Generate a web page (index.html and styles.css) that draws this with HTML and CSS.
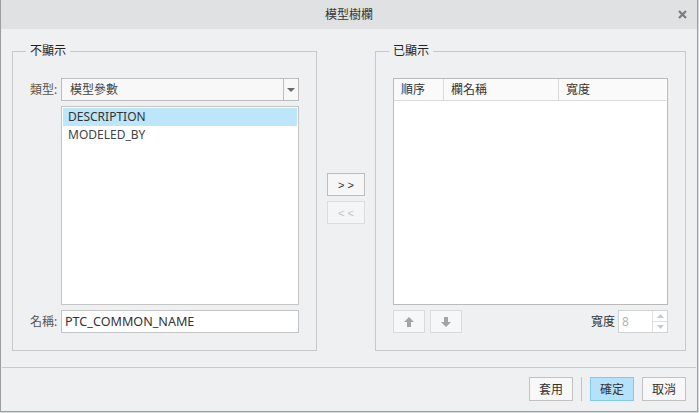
FILE: index.html
```html
<!DOCTYPE html>
<html lang="zh-Hant-TW">

<head>
    <meta charset="UTF-8">
    <meta name="viewport" content="width=device-width, initial-scale=1.0">
    <title>模型樹欄</title>
    <link rel="stylesheet" href="styles.css">
</head>

<body>
    <div class="dialog">
        <div class="titlebar">
            <span></span>
            <span class="title">模型樹欄</span>
            <span class="close">
                <svg width="9" height="9" viewBox="0 0 9 9">
                    <path d="M1 1 L8 8 M8 1 L1 8" stroke="#7b7b7b" stroke-width="2.2" fill="none" />
                </svg>
            </span>
        </div>

        <div class="content">
            <fieldset class="group group-left">
                <legend>不顯示</legend>
                <div class="group-body">
                    <div class="field-row">
                        <span class="field-label">類型:</span>
                        <div class="combo">
                            <span class="combo-text">模型參數</span>
                            <span class="combo-arrow">
                                <svg width="8" height="4" viewBox="0 0 8 4">
                                    <path d="M0 0 H8 L4 4 Z" fill="#6a6a6a" />
                                </svg>
                            </span>
                        </div>
                    </div>
                    <div class="list">
                        <div class="list-item selected">DESCRIPTION</div>
                        <div class="list-item">MODELED_BY</div>
                    </div>
                    <div class="field-row">
                        <span class="field-label">名稱:</span>
                        <input class="text-input" type="text" value="PTC_COMMON_NAME">
                    </div>
                </div>
            </fieldset>

            <div class="mover">
                <button class="move-btn">&gt; &gt;</button>
                <button class="move-btn" disabled>&lt; &lt;</button>
            </div>

            <fieldset class="group group-right">
                <legend>已顯示</legend>
                <div class="group-body">
                    <div class="table">
                        <div class="table-head">
                            <div class="th col-order">順序</div>
                            <div class="th col-name">欄名稱</div>
                            <div class="th col-width">寬度</div>
                        </div>
                    </div>
                    <div class="tool-row">
                        <button class="icon-btn">
                            <svg width="10" height="10" viewBox="0 0 10 10">
                                <path d="M5 0 L10 5 H7 V10 H3 V5 H0 Z" fill="#a4a4a4" />
                            </svg>
                        </button>
                        <button class="icon-btn">
                            <svg width="10" height="10" viewBox="0 0 10 10">
                                <path d="M5 10 L10 5 H7 V0 H3 V5 H0 Z" fill="#a4a4a4" />
                            </svg>
                        </button>
                        <span class="spin-label">寬度</span>
                        <div class="spinner">
                            <span class="spin-value">8</span>
                            <span class="spin-arrows">
                                <span class="spin-half">
                                    <svg width="7" height="4" viewBox="0 0 7 4"><path d="M0 4 H7 L3.5 0 Z" fill="#c9c9c9" /></svg>
                                </span>
                                <span class="spin-half">
                                    <svg width="7" height="4" viewBox="0 0 7 4"><path d="M0 0 H7 L3.5 4 Z" fill="#c9c9c9" /></svg>
                                </span>
                            </span>
                        </div>
                    </div>
                </div>
            </fieldset>
        </div>

        <div class="footer">
            <button class="btn">套用</button>
            <span class="divider"></span>
            <button class="btn btn-primary">確定</button>
            <button class="btn">取消</button>
        </div>
    </div>
</body>

</html>
```

FILE: styles.css
```css
* {
    box-sizing: border-box;
}

body {
    margin: 0;
    background-color: #d6dcdd;
    font-family: "Noto Sans", "Noto Sans CJK TC", sans-serif;
    font-size: 12px;
    color: #333;
}

.dialog {
    width: 698px;
    height: 412px;
    display: flex;
    flex-direction: column;
    background-color: #eff0f2;
    border: 1px solid #9d9d9d;
    border-top: 0;
}

.titlebar {
    height: 29px;
    display: grid;
    grid-template-columns: 1fr auto 1fr;
    align-items: center;
    background-color: #dfe1e2;
}

.title {
    line-height: 16px;
    color: #333;
}

.close {
    justify-self: end;
    margin-right: 10px;
    display: flex;
}

.content {
    display: flex;
    padding: 14px 11px 16px;
}

.group {
    margin: 0;
    padding: 0;
    min-width: 0;
    height: 308px;
    border: 1px solid #c8c9cc;
}

.group legend {
    margin-left: 13px;
    padding: 0 4px;
    line-height: 16px;
    color: #222;
}

.group-left {
    width: 305px;
}

.group-right {
    width: 311px;
}

.group-body {
    display: flex;
    flex-direction: column;
    gap: 5px;
    padding: 19px 17px 17px;
}

.field-row {
    display: flex;
    align-items: center;
    height: 23px;
}

.field-label {
    width: 31px;
    color: #555;
    line-height: 16px;
}

.combo {
    flex: 1;
    height: 23px;
    display: flex;
    background-color: #f8f8f8;
    border: 1px solid #bdbdbd;
}

.combo-text {
    flex: 1;
    padding-left: 8px;
    line-height: 21px;
    color: #444;
}

.combo-arrow {
    width: 15px;
    display: flex;
    align-items: center;
    justify-content: center;
    border-left: 1px solid #bdbdbd;
}

.list {
    margin-left: 31px;
    height: 199px;
    padding: 1px;
    background-color: #fff;
    border: 1px solid #c4c4c4;
}

.list-item {
    height: 18px;
    padding-left: 5px;
    line-height: 18px;
    color: #444;
}

.list-item.selected {
    background-color: #bee6fb;
    color: #333;
}

.text-input {
    flex: 1;
    height: 23px;
    margin: 0;
    padding: 0 0 0 3px;
    font-family: inherit;
    font-size: 12.6px;
    color: #333;
    background-color: #fff;
    border: 1px solid #c4c4c4;
    outline: none;
}

.mover {
    width: 58px;
    display: flex;
    flex-direction: column;
    gap: 5px;
    padding: 130px 0 0 10px;
}

.move-btn {
    width: 38px;
    height: 23px;
    padding: 0;
    font-family: "Liberation Sans", sans-serif;
    font-size: 11px;
    color: #333;
    background-color: #f6f6f7;
    border: 1px solid #bdbdbd;
}

.move-btn:disabled {
    color: #c4c4c4;
    background-color: #f4f5f6;
    border-color: #dcdcdc;
}

.table {
    height: 227px;
    background-color: #fff;
    border: 1px solid #bababa;
}

.table-head {
    display: flex;
    height: 22px;
    margin-right: 1px;
    background-color: #fafafa;
    border-bottom: 1px solid #d9d9d9;
}

.th {
    padding-left: 7px;
    line-height: 21px;
    color: #333;
}

.col-order {
    width: 50px;
    border-right: 1px solid #d9d9d9;
}

.col-name {
    width: 115px;
    border-right: 1px solid #d9d9d9;
}

.col-width {
    flex: 1;
}

.tool-row {
    display: flex;
    align-items: center;
    gap: 5px;
    height: 23px;
}

.icon-btn {
    width: 32px;
    height: 23px;
    padding: 0;
    display: flex;
    align-items: center;
    justify-content: center;
    background-color: #f6f7f8;
    border: 1px solid #dadada;
}

.spin-label {
    margin-left: auto;
    margin-right: -2px;
    line-height: 16px;
    color: #333;
}

.spinner {
    width: 50px;
    height: 23px;
    display: flex;
    background-color: #fff;
    border: 1px solid #d2d2d2;
}

.spin-value {
    flex: 1;
    padding-left: 3px;
    line-height: 21px;
    color: #b4b4b4;
}

.spin-arrows {
    width: 15px;
    display: flex;
    flex-direction: column;
    border-left: 1px solid #dedede;
}

.spin-half {
    flex: 1;
    display: flex;
    align-items: center;
    justify-content: center;
}

.spin-half + .spin-half {
    border-top: 1px solid #dedede;
}

.footer {
    flex: 1;
    display: flex;
    justify-content: flex-end;
    align-items: flex-start;
    gap: 8px;
    margin: 0 1px;
    padding: 9px 10px 0 0;
    border-top: 1px solid #c9c9c9;
}

.btn {
    width: 44px;
    height: 24px;
    padding: 0;
    font-family: inherit;
    font-size: 12px;
    color: #333;
    background-color: #f8f8f8;
    border: 1px solid #c2c2c2;
}

.btn-primary {
    background-color: #b4e1fb;
    border-color: #80caf2;
}

.divider {
    width: 1px;
    height: 24px;
    background-color: #c4c4c4;
}
```
